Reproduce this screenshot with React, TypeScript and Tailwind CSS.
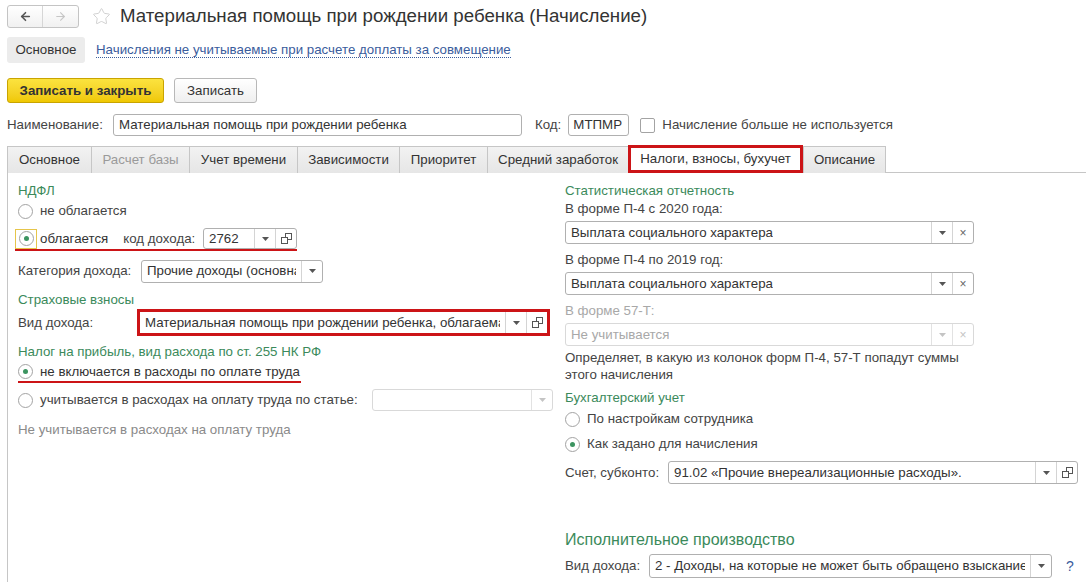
import { ArrowLeft, ArrowRight, Star } from 'lucide-react'

type FieldProps = {
  text?: string
  size: string
  drop?: boolean
  open?: boolean
  clear?: boolean
  disabled?: boolean
}

function Tri({ light }: { light?: boolean }) {
  return (
    <svg width="7" height="4" viewBox="0 0 7 4">
      <polygon points="0,0 7,0 3.5,4" fill={light ? '#c4c4c4' : '#555'} />
    </svg>
  )
}

function OpenIcon() {
  return (
    <svg width="11" height="11" viewBox="0 0 11 11" fill="none" stroke="#555" strokeWidth="1">
      <rect x="4.5" y="0.5" width="6" height="6" fill="white" />
      <rect x="0.5" y="4.5" width="6" height="6" fill="white" />
    </svg>
  )
}

function Field({ text, size, drop = true, open, clear, disabled }: FieldProps) {
  return (
    <div
      className={`flex items-stretch rounded-[3px] border bg-white shrink-0 min-w-0 ${size} ${
        disabled ? 'border-[#d9d9d9] text-[#a8a8a8]' : 'border-[#b0b0b0] text-[#333]'
      }`}
    >
      <div className="flex-1 min-w-0 overflow-hidden whitespace-nowrap px-[5px] flex items-center">
        <span className="block overflow-hidden">{text}</span>
      </div>
      {drop && (
        <div className={`w-[21px] shrink-0 border-l flex items-center justify-center ${disabled ? 'border-[#e2e2e2]' : 'border-[#d4d4d4]'}`}>
          <Tri light={disabled} />
        </div>
      )}
      {open && (
        <div className="w-[21px] shrink-0 border-l border-[#d4d4d4] flex items-center justify-center">
          <OpenIcon />
        </div>
      )}
      {clear && (
        <div className={`w-[21px] shrink-0 border-l flex items-center justify-center text-[12px] ${disabled ? 'border-[#e2e2e2] text-[#c4c4c4]' : 'border-[#d4d4d4] text-[#666]'}`}>
          ×
        </div>
      )}
    </div>
  )
}

function Radio({ checked }: { checked?: boolean }) {
  return (
    <span className="w-[15px] h-[15px] rounded-full border border-[#a3a3a3] bg-white flex items-center justify-center shrink-0">
      {checked && <span className="w-[5px] h-[5px] rounded-full bg-[#3c9460]" />}
    </span>
  )
}

function Group({ children, className = '' }: { children: React.ReactNode; className?: string }) {
  return <div className={`h-[18px] flex items-center whitespace-nowrap text-[#3b8a5b] ${className}`}>{children}</div>
}

const tabs = [
  { name: 'Основное', w: 'w-[84px]' },
  { name: 'Расчет базы', w: 'w-[98px]', dim: true },
  { name: 'Учет времени', w: 'w-[108px]' },
  { name: 'Зависимости', w: 'w-[102px]' },
  { name: 'Приоритет', w: 'w-[88px]' },
  { name: 'Средний заработок', w: 'w-[141px]' },
  { name: 'Налоги, взносы, бухучет', w: 'w-[175px]', active: true },
  { name: 'Описание', w: 'w-[83px]' },
]

export default function App() {
  return (
    <div className="w-[1086px] h-[582px] overflow-hidden bg-white font-['Liberation_Sans',Arial,sans-serif] text-[13.3px] text-[#444]">
      {/* title row */}
      <div className="flex items-center h-[23px] mt-[5px] ml-[7px]">
        <div className="flex h-[23px] border border-[#c4c4c4] rounded-[3px] bg-gradient-to-b from-white to-[#f1f1f1]">
          <div className="w-[35px] flex items-center justify-center border-r border-[#d6d6d6]">
            <ArrowLeft size={13} strokeWidth={3} color="#555" />
          </div>
          <div className="w-[35px] flex items-center justify-center">
            <ArrowRight size={13} strokeWidth={2} color="#c6c6c6" />
          </div>
        </div>
        <Star size={19} strokeWidth={1.2} color="#cfcfcf" className="ml-[13px]" />
        <div className="ml-[9px] text-[18.7px] text-[#333] leading-none whitespace-nowrap">
          Материальная помощь при рождении ребенка (Начисление)
        </div>
      </div>

      {/* command panel tabs */}
      <div className="flex items-center h-[26px] mt-[9px] ml-[7px]">
        <div className="h-[26px] w-[78px] rounded-[3px] bg-[#ececec] text-[#333] flex items-center justify-center">Основное</div>
        <span className="ml-[11px] text-[#3a5c9c] border-b border-dotted border-[#3a5c9c] leading-[15px] whitespace-nowrap">
          Начисления не учитываемые при расчете доплаты за совмещение
        </span>
      </div>

      {/* buttons */}
      <div className="flex items-center h-[25px] mt-[15px] ml-[7px] gap-[10px]">
        <div className="h-[25px] w-[157px] rounded-[3px] border border-[#c9a400] bg-gradient-to-b from-[#fbe33e] to-[#f0c800] text-[#333] font-bold flex items-center justify-center whitespace-nowrap">
          Записать и закрыть
        </div>
        <div className="h-[25px] w-[83px] rounded-[3px] border border-[#b8b8b8] bg-gradient-to-b from-white to-[#efefef] text-[#333] flex items-center justify-center">
          Записать
        </div>
      </div>

      {/* name row */}
      <div className="flex items-center h-[22px] mt-[11px] ml-[7px] whitespace-nowrap">
        <span className="w-[106px]">Наименование:</span>
        <div className="w-[409px] h-[22px] border border-[#b0b0b0] rounded-[3px] text-[#333] px-[5px] flex items-center">
          Материальная помощь при рождении ребенка
        </div>
        <span className="ml-[13px]">Код:</span>
        <div className="ml-[7px] w-[61px] h-[22px] border border-[#b0b0b0] rounded-[3px] text-[#333] px-[4px] flex items-center">
          МТПМР
        </div>
        <span className="ml-[11px] w-[15px] h-[15px] border border-[#a3a3a3] rounded-[2px] bg-white" />
        <span className="ml-[7px]">Начисление больше не используется</span>
      </div>

      {/* tabs */}
      <div className="flex mt-[10px] ml-[7px] h-[27px] border-b border-[#c6c6c6]">
        {tabs.map(t => (
          <div
            key={t.name}
            className={`${t.w} h-[27px] flex items-center justify-center whitespace-nowrap ${
              t.active
                ? 'bg-white border-[3px] border-[#cc1417] text-[#333] -mt-[1px] h-[28px]'
                : `bg-gradient-to-b from-[#f2f2f2] to-[#e6e6e6] border-t border-l border-[#c6c6c6] last:border-r ${t.dim ? 'text-[#9a9a9a]' : 'text-[#333]'}`
            }`}
          >
            {t.name}
          </div>
        ))}
      </div>

      {/* content */}
      <div className="flex ml-[7px] border-l border-[#c6c6c6] h-[420px] whitespace-nowrap">
        {/* left column */}
        <div className="w-[557px] pl-[10px] flex flex-col items-start">
          <Group className="mt-[9px]">НДФЛ</Group>
          <div className="h-[22px] flex items-center gap-[7px]">
            <Radio />
            <span>не облагается</span>
          </div>
          <div className="mt-[6px] -ml-[3px] flex items-center h-[23px] border-b-2 border-[#cc1417] w-[282px]">
            <div className="w-[22px] h-[20px] border border-[#e6c54a] flex items-center justify-center">
              <Radio checked />
            </div>
            <span className="ml-[3px] text-[#333]">облагается</span>
            <span className="ml-[15px]">код дохода:</span>
            <div className="ml-auto">
              <Field text="2762" size="w-[94px] h-[21px]" open />
            </div>
          </div>
          <div className="mt-[9px] flex items-center h-[22px]">
            <span className="w-[123px]">Категория дохода:</span>
            <Field text="Прочие доходы (основная налоговая база)" size="w-[182px] h-[23px]" />
          </div>
          <Group className="mt-[9px]">Страховые взносы</Group>
          <div className="flex items-center h-[27px]">
            <span className="w-[119px]">Вид дохода:</span>
            <div className="border-[3px] border-[#cc1417] h-[27px] w-[413px] flex">
              <Field
                text="Материальная помощь при рождении ребенка, облагаемая страховыми взносами"
                size="w-[407px] h-[21px] border-0 rounded-none"
                open
              />
            </div>
          </div>
          <Group className="mt-[7px]">Налог на прибыль, вид расхода по ст. 255 НК РФ</Group>
          <div className="mt-[1px] h-[21px] flex items-center gap-[7px] border-b-2 border-[#cc1417] pr-[1px]">
            <Radio checked />
            <span className="text-[#333]">не включается в расходы по оплате труда</span>
          </div>
          <div className="mt-[6px] h-[22px] flex items-center">
            <Radio />
            <span className="ml-[7px] w-[332px]">учитывается в расходах на оплату труда по статье:</span>
            <Field size="w-[181px] h-[22px]" disabled />
          </div>
          <div className="mt-[10px] h-[18px] flex items-center text-[#8a8a8a]">Не учитывается в расходах на оплату труда</div>
        </div>

        {/* right column */}
        <div className="w-[513px] flex flex-col items-start">
          <Group className="mt-[9px]">Статистическая отчетность</Group>
          <div className="h-[18px] flex items-center">В форме П-4 с 2020 года:</div>
          <div className="mt-[3px]">
            <Field text="Выплата социального характера" size="w-[409px] h-[23px]" clear />
          </div>
          <div className="mt-[7px] h-[18px] flex items-center">В форме П-4 по 2019 год:</div>
          <div className="mt-[3px]">
            <Field text="Выплата социального характера" size="w-[409px] h-[23px]" clear />
          </div>
          <div className="mt-[7px] h-[18px] flex items-center text-[#a8a8a8]">В форме 57-Т:</div>
          <div className="mt-[3px]">
            <Field text="Не учитывается" size="w-[409px] h-[23px]" clear disabled />
          </div>
          <div className="mt-[3px] leading-[17px]">
            Определяет, в какую из колонок форм П-4, 57-Т попадут суммы
            <br />
            этого начисления
          </div>
          <Group className="mt-[6px]">Бухгалтерский учет</Group>
          <div className="mt-[1px] h-[22px] flex items-center gap-[7px]">
            <Radio />
            <span>По настройкам сотрудника</span>
          </div>
          <div className="mt-[3px] h-[22px] flex items-center gap-[7px]">
            <Radio checked />
            <span>Как задано для начисления</span>
          </div>
          <div className="mt-[6px] h-[23px] flex items-center">
            <span className="w-[103px]">Счет, субконто:</span>
            <Field text="91.02 «Прочие внереализационные расходы»." size="w-[410px] h-[23px]" open />
          </div>
          <div className="mt-[46px] h-[20px] flex items-center text-[16px] text-[#3b8a5b]">Исполнительное производство</div>
          <div className="mt-[4px] h-[24px] flex items-center">
            <span className="w-[84px]">Вид дохода:</span>
            <Field
              text="2 - Доходы, на которые не может быть обращено взыскание (ст. 101 229-ФЗ)"
              size="w-[403px] h-[24px]"
            />
            <span className="ml-[14px] text-[#3a5c9c] text-[14px]">?</span>
          </div>
        </div>
      </div>
    </div>
  )
}
